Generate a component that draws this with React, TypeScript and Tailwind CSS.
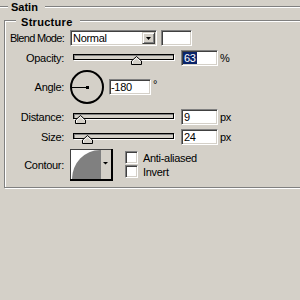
import React from "react";

const sunken =
  "border border-t-[#808080] border-l-[#808080] border-b-white border-r-white shadow-[inset_1px_1px_0_#404040,inset_-1px_-1px_0_#d4d0c8]";

function Thumb({ left }: { left: number }) {
  return (
    <svg
      width="11"
      height="9"
      viewBox="0 0 11 9"
      className="absolute top-[6px]"
      style={{ left }}
    >
      <polygon points="5.5,0.5 10.5,5 10.5,8.5 0.5,8.5 0.5,5" fill="#d4d0c8" stroke="#000" strokeWidth="1" />
      <polyline points="1.5,7.5 1.5,5.4 5.5,1.9 9.5,5.4" fill="none" stroke="#fff" strokeWidth="1" />
    </svg>
  );
}

function Slider({ thumb }: { thumb: number }) {
  return (
    <div className="relative w-[111px] h-[16px] shrink-0">
      <div className="mt-[4px] ml-[3px] w-[101px] h-[6px] border border-black bg-[#d4d0c8] shadow-[inset_1px_1px_0_#808080,1px_1px_0_#fff]" />
      <Thumb left={thumb} />
    </div>
  );
}

function Label({ children, tight }: { children: React.ReactNode; tight?: boolean }) {
  return (
    <div className={tight ? "w-[59px] shrink-0 text-right leading-[12px] tracking-[-0.7px]" : "w-[59px] shrink-0 text-right leading-[12px]"}>
      {children}
    </div>
  );
}

function Checkbox({ label }: { label: string }) {
  return (
    <div className="flex items-center h-[13px]">
      <div className={`w-[13px] h-[13px] bg-white ${sunken}`} />
      <span className="ml-[5px] leading-[12px]">{label}</span>
    </div>
  );
}

export default function App() {
  return (
    <div className="w-[300px] h-[300px] overflow-hidden bg-[#d4d0c8] font-['Liberation_Sans',Arial,sans-serif] text-[11px] tracking-[-0.3px] text-black">
      {/* Satin group */}
      <div className="relative -ml-[10px] mt-[6px] w-[330px] h-[320px] border border-[#808080] shadow-[inset_1px_1px_0_#fff,1px_1px_0_#fff]">
        <span className="absolute left-[17px] -top-[6px] w-[37px] h-[12px] pl-[3px] bg-[#d4d0c8] font-bold leading-[12px] tracking-[0px]">
          Satin
        </span>

        {/* Structure group */}
        <div className="relative ml-[13px] mt-[13px] w-[320px] h-[168px] border border-[#808080] shadow-[inset_1px_1px_0_#fff,1px_1px_0_#fff] pt-[9px]">
          <span className="absolute left-[11px] -top-[5px] w-[64px] h-[12px] pl-[5px] bg-[#d4d0c8] font-bold leading-[12px] tracking-[0.3px]">
            Structure
          </span>

          {/* Blend Mode */}
          <div className="flex items-center h-[16px]">
            <Label tight>Blend Mode:</Label>
            <div className={`ml-[6px] w-[87px] h-[16px] bg-white flex items-center pl-[2px] ${sunken}`}>
              <span className="flex-1 leading-[12px]">Normal</span>
              <div className="mr-[1px] w-[13px] h-[12px] bg-[#d4d0c8] border border-t-[#d4d0c8] border-l-[#d4d0c8] border-b-[#404040] border-r-[#404040] shadow-[inset_1px_1px_0_#fff,inset_-1px_-1px_0_#808080] flex items-center justify-center">
                <svg width="5" height="3" viewBox="0 0 5 3">
                  <polygon points="0,0 5,0 2.5,3" fill="#000" />
                </svg>
              </div>
            </div>
            <div className={`ml-[4px] w-[31px] h-[16px] bg-white ${sunken}`} />
          </div>

          {/* Opacity */}
          <div className="mt-[4px] flex items-center h-[16px]">
            <Label>Opacity:</Label>
            <div className="ml-[6px] flex items-center">
              <Slider thumb={61} />
              <div className={`w-[37px] h-[16px] bg-white flex items-center pl-[1px] ${sunken}`}>
                <span className="inline-block h-[12px] leading-[12px] px-[1px] bg-[#0a246a] text-white">63</span>
              </div>
              <span className="ml-[2px] leading-[12px]">%</span>
            </div>
          </div>

          {/* Angle */}
          <div className="mt-[4px] flex items-center h-[34px]">
            <Label>Angle:</Label>
            <svg width="34" height="34" viewBox="0 0 34 34" className="ml-[6px] shrink-0">
              <circle cx="17" cy="17" r="16" fill="none" stroke="#000" strokeWidth="2" />
              <rect x="1" y="17" width="16" height="1" fill="#000" />
              <rect x="16" y="16" width="3" height="3" fill="#000" />
            </svg>
            <div className={`ml-[5px] w-[42px] h-[16px] bg-white flex items-center pl-[1px] ${sunken}`}>
              <span className="leading-[12px]">-180</span>
            </div>
            <span className="ml-[2px] self-start mt-[8px] leading-[12px]">°</span>
          </div>

          {/* Distance */}
          <div className="mt-[5px] flex items-center h-[16px]">
            <Label>Distance:</Label>
            <div className="ml-[6px] flex items-center">
              <Slider thumb={5} />
              <div className={`w-[37px] h-[16px] bg-white flex items-center pl-[2px] ${sunken}`}>
                <span className="leading-[12px]">9</span>
              </div>
              <span className="ml-[2px] leading-[12px]">px</span>
            </div>
          </div>

          {/* Size */}
          <div className="mt-[4px] flex items-center h-[16px]">
            <Label>Size:</Label>
            <div className="ml-[6px] flex items-center">
              <Slider thumb={12} />
              <div className={`w-[37px] h-[16px] bg-white flex items-center pl-[2px] ${sunken}`}>
                <span className="leading-[12px]">24</span>
              </div>
              <span className="ml-[2px] leading-[12px]">px</span>
            </div>
          </div>

          {/* Contour */}
          <div className="mt-[4px] flex items-center h-[32px]">
            <Label>Contour:</Label>
            <svg width="43" height="32" viewBox="0 0 43 32" className="ml-[6px] shrink-0">
              <rect x="0" y="0" width="43" height="32" fill="#d4d0c8" />
              <rect x="1" y="1" width="29" height="29" fill="#fff" />
              <path d="M2 30 A28 29 0 0 1 30 1 L30 30 Z" fill="#808080" />
              <rect x="30" y="1" width="1" height="29" fill="#808080" />
              <polygon points="33,13 38,13 35.5,15.5" fill="#000" />
              <rect x="0" y="0" width="43" height="1" fill="#404040" />
              <rect x="0" y="0" width="1" height="32" fill="#404040" />
              <rect x="0" y="30" width="43" height="2" fill="#000" />
              <rect x="41" y="0" width="2" height="32" fill="#000" />
            </svg>
            <div className="ml-[12px] self-start mt-[2px] flex flex-col gap-[1px]">
              <Checkbox label="Anti-aliased" />
              <Checkbox label="Invert" />
            </div>
          </div>
        </div>
      </div>
    </div>
  );
}
